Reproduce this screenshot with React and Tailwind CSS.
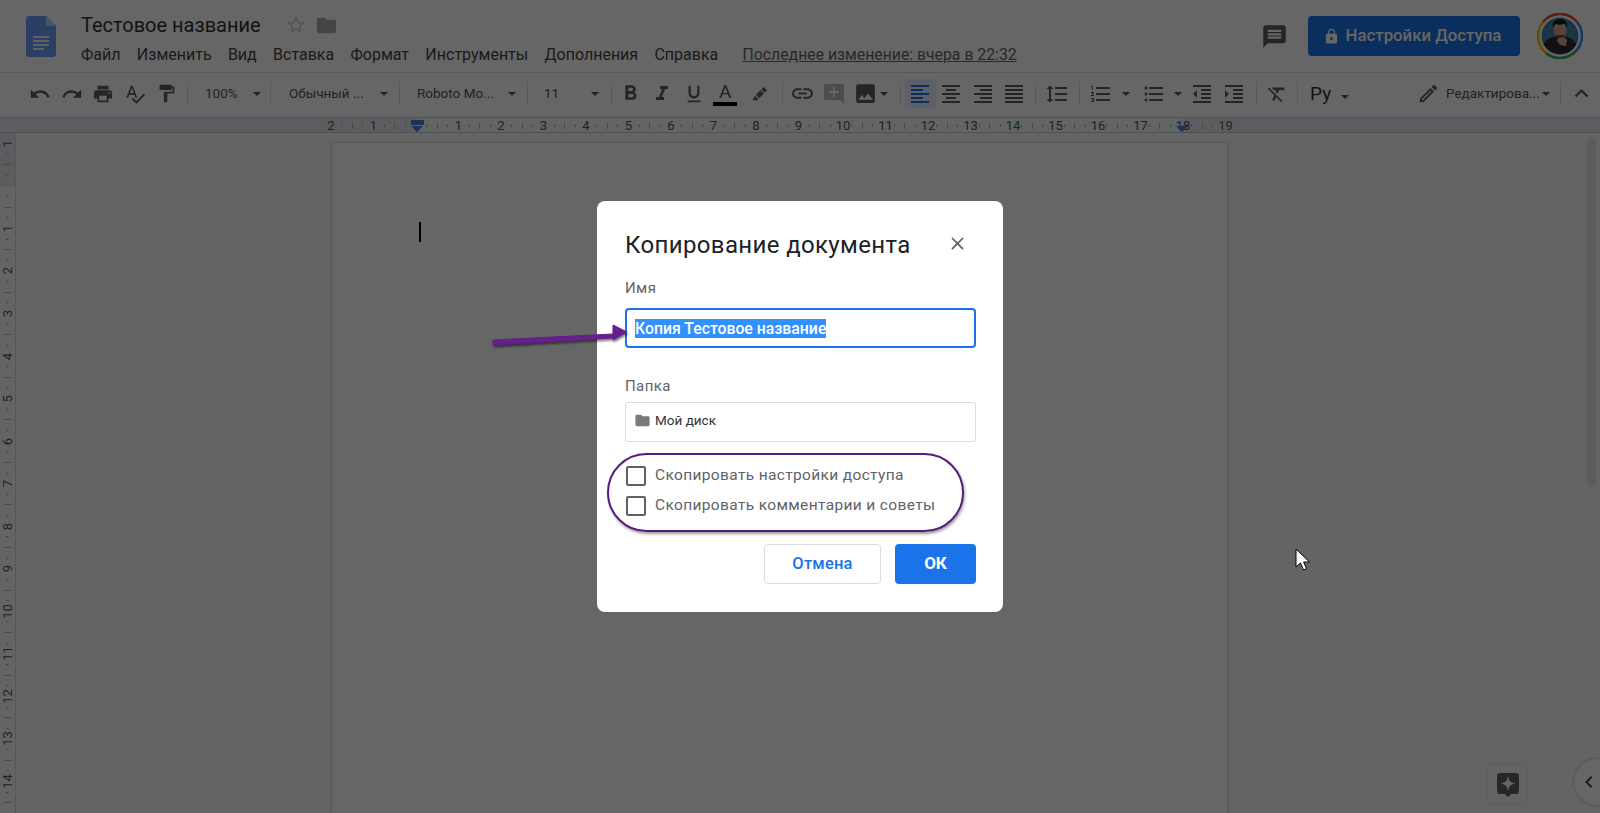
import React from "react";
import {
  MdUndo, MdRedo, MdPrint, MdSpellcheck, MdFormatPaint, MdFormatBold, MdFormatItalic, MdFormatUnderlined,
  MdLink, MdAddComment, MdInsertPhoto, MdFormatAlignLeft, MdFormatAlignCenter, MdFormatAlignRight,
  MdFormatAlignJustify, MdFormatLineSpacing, MdFormatListNumbered, MdFormatListBulleted, MdFormatIndentDecrease,
  MdFormatIndentIncrease, MdFormatClear, MdOutlineEdit, MdExpandLess, MdLock, MdStarBorder, MdFolder, MdMessage, MdClose,
  MdChevronLeft,
} from "react-icons/md";

const font = "font-['Roboto',sans-serif]";
const menu = ["Файл", "Изменить", "Вид", "Вставка", "Формат", "Инструменты", "Дополнения", "Справка"];
const hNumbers = [2, 1, 0, 1, 2, 3, 4, 5, 6, 7, 8, 9, 10, 11, 12, 13, 14, 15, 16, 17, 18];
const vNumbers = [1, 0, 1, 2, 3, 4, 5, 6, 7, 8, 9, 10, 11, 12, 13, 14, 0];

const Sep = () => <div className="h-[23px] w-px shrink-0 bg-[#dadce0]" />;
const Arrow = ({ className = "" }) => (
  <div className={`h-0 w-0 shrink-0 border-x-[4px] border-t-[4px] border-x-transparent border-t-[#555] ${className}`} />
);
const Btn = ({ children }) => (
  <div className="flex h-[29px] w-[31.5px] shrink-0 items-center justify-center text-[#5a5e62]">{children}</div>
);
const Drop = ({ width, left, right, label }) => (
  <div className={`flex shrink-0 items-center justify-between ${width} ${left} ${right}`}>
    <span className="text-[13.5px] text-[#555]">{label}</span>
    <Arrow />
  </div>
);

function DocIcon() {
  return (
    <svg width="30" height="41" viewBox="0 0 30 41">
      <path d="M3 0h17l10 10v28a3 3 0 0 1-3 3H3a3 3 0 0 1-3-3V3a3 3 0 0 1 3-3z" fill="#6a9dfb" />
      <path d="M20 0l10 10h-10z" fill="#b4cefc" />
      <path d="M7 20h16v2H7zM7 24h16v2H7zM7 28h16v2H7zM7 32h11v2H7z" fill="#f1f1f1" />
    </svg>
  );
}

function Avatar() {
  return (
    <svg width="46" height="46" viewBox="0 0 46 46">
      <path d="M6 9A22 22 0 0 1 40 9" fill="none" stroke="#ea4335" strokeWidth="2.5" />
      <path d="M40 9A22 22 0 0 1 38 39" fill="none" stroke="#4285f4" strokeWidth="2.5" />
      <path d="M38 39A22 22 0 0 1 9 40" fill="none" stroke="#34a853" strokeWidth="2.5" />
      <path d="M9 40A22 22 0 0 1 6 9" fill="none" stroke="#fbbc04" strokeWidth="2.5" />
      <circle cx="23" cy="23" r="18.5" fill="#3f86a8" />
      <path d="M6.5 31c3-5 8-7 13-8h7c5 1 10 3 13 8a18.500 18.500 0 0 1-33 0z" fill="#2b2a2e" />
      <ellipse cx="23" cy="17" rx="6.500" ry="8.500" fill="#d9a78c" />
      <path d="M16 15c-1-7 3-9 7-9s8 2 7 9c-1-3-2-4-3-4-3 1-6 1-8 0-1 0-2 1-3 4z" fill="#1b1a1c" />
      <path d="M19 21c2 2 6 2 8 0l-1 5c-2 1-4 1-6 0z" fill="#4a352c" />
      <path d="M21 25l6-1 3 3-1 6-6-1-3-4z" fill="#d9a78c" />
    </svg>
  );
}

function Toolbar() {
  return (
    <div className="flex h-[44px] shrink-0 items-center pb-[3px] pl-[24.5px]">
      <Btn><MdUndo size={22} /></Btn>
      <Btn><MdRedo size={22} /></Btn>
      <Btn><MdPrint size={22} /></Btn>
      <Btn><MdSpellcheck size={22} /></Btn>
      <Btn><MdFormatPaint size={21} /></Btn>
      <div className="w-[5px] shrink-0" />
      <Sep />
      <Drop width="w-[82px]" left="pl-[17px]" right="pr-[9px]" label="100%" />
      <Sep />
      <Drop width="w-[128px]" left="pl-[18px]" right="pr-[11px]" label="Обычный ..." />
      <Sep />
      <Drop width="w-[127px]" left="pl-[17px]" right="pr-[11px]" label="Roboto Mo..." />
      <Sep />
      <Drop width="w-[83px]" left="pl-[16px]" right="pr-[12px]" label="11" />
      <Sep />
      <div className="w-[3px] shrink-0" />
      <Btn><MdFormatBold size={25} /></Btn>
      <Btn><MdFormatItalic size={24} /></Btn>
      <Btn><MdFormatUnderlined size={22} /></Btn>
      <Btn>
        <div className="flex flex-col items-center">
          <span className="text-[19px] leading-[20px] text-[#555]">A</span>
          <div className="h-[4px] w-[24px] bg-black" />
        </div>
      </Btn>
      <div className="w-[3px] shrink-0" />
      <Btn>
        <svg width="20" height="20" viewBox="0 0 24 24" fill="currentColor">
          <path d="M16.500 3.500l4 4-3 3-4-4zM12.500 7.500l4 4-5.500 5.500-4-4zM6 14l4 4-1.500 1.500H3z" />
        </svg>
      </Btn>
      <div className="w-[6px] shrink-0" />
      <Sep />
      <div className="w-[4.5px] shrink-0" />
      <Btn><MdLink size={25} /></Btn>
      <Btn><span className="opacity-40"><MdAddComment size={24} /></span></Btn>
      <Btn><MdInsertPhoto size={25} /></Btn>
      <Arrow className="-ml-[2px]" />
      <div className="w-[12px] shrink-0" />
      <Sep />
      <div className="w-[4px] shrink-0" />
      <div className="flex h-[29px] w-[31px] shrink-0 items-center justify-center rounded-[2px] bg-[#e8f0fe] text-[#1a73e8]">
        <MdFormatAlignLeft size={24} />
      </div>
      <Btn><MdFormatAlignCenter size={24} /></Btn>
      <Btn><MdFormatAlignRight size={24} /></Btn>
      <Btn><MdFormatAlignJustify size={24} /></Btn>
      <div className="w-[5px] shrink-0" />
      <Sep />
      <div className="w-[5px] shrink-0" />
      <Btn><MdFormatLineSpacing size={24} /></Btn>
      <div className="w-[6px] shrink-0" />
      <Sep />
      <div className="w-[6px] shrink-0" />
      <Btn><MdFormatListNumbered size={24} /></Btn>
      <Arrow className="ml-[5px]" />
      <div className="w-[8px] shrink-0" />
      <Btn><MdFormatListBulleted size={24} /></Btn>
      <Arrow className="ml-[4px]" />
      <div className="w-[5px] shrink-0" />
      <Btn><MdFormatIndentDecrease size={24} /></Btn>
      <Btn><MdFormatIndentIncrease size={24} /></Btn>
      <div className="w-[6px] shrink-0" />
      <Sep />
      <div className="w-[5px] shrink-0" />
      <Btn><MdFormatClear size={22} /></Btn>
      <div className="w-[4px] shrink-0" />
      <Sep />
      <span className="ml-[12px] w-[21px] shrink-0 text-[19px] leading-none text-[#333]">Ру</span>
      <Arrow className="mt-[6px] ml-[10px] border-x-[3px] border-t-[3px]" />
      <MdOutlineEdit size={23} className="ml-[68px] shrink-0 text-[#5a5e62]" />
      <span className="ml-[6px] text-[13.5px] text-[#555]">Редактирова...</span>
      <Arrow className="ml-[2px]" />
      <div className="ml-[10px] shrink-0"><Sep /></div>
      <MdExpandLess size={27} className="ml-[7px] shrink-0 text-[#5a5e62]" />
    </div>
  );
}

function HRuler() {
  return (
    <div className="relative h-[16px] shrink-0 overflow-hidden border-y border-[#c8cbd0] bg-[#e6e9f0]">
      <div className="absolute top-0 bottom-0 left-[417px] w-[765px] bg-[#f8f9fb]" />
      <div className="relative flex h-full items-center pl-[325.7px]">
        {hNumbers.map((n, i) => (
          <div key={i} className="flex h-full w-[42.5px] shrink-0 items-center">
            <div className="w-[10.62px] text-center text-[13px] leading-none text-[#555]">{n === 0 ? "" : n}</div>
            <div className="flex w-[10.62px] justify-center"><div className="h-[3px] w-px bg-[#b5b5b5]" /></div>
            <div className="flex w-[10.62px] justify-center"><div className="h-[7px] w-px bg-[#b5b5b5]" /></div>
            <div className="flex w-[10.62px] justify-center"><div className="h-[3px] w-px bg-[#b5b5b5]" /></div>
          </div>
        ))}
        <div className="w-[10.62px] text-center text-[13px] leading-none text-[#555]">19</div>
      </div>
      <div className="absolute top-[2px] left-[411px] h-[5px] w-[13px] bg-[#4a7fe0]" />
      <div className="absolute top-[8px] left-[411px] h-0 w-0 border-x-[6.5px] border-t-[6px] border-x-transparent border-t-[#4a7fe0]" />
      <div className="absolute top-[8px] left-[1176px] h-0 w-0 border-x-[6px] border-t-[6px] border-x-transparent border-t-[#4a7fe0]" />
    </div>
  );
}

function VRuler() {
  return (
    <div className="relative w-[16px] shrink-0 overflow-hidden border-r border-[#d8dadd] bg-[#fafbfb]">
      <div className="absolute top-0 right-0 left-0 h-[54px] bg-[#e3e6ea]" />
      <div className="relative mt-[5px] flex flex-col">
        {vNumbers.map((n, i) => (
          <div key={i} className="flex h-[42.55px] shrink-0 flex-col items-center">
            <div className="flex h-[10.64px] items-center justify-center">
              <span className="-rotate-90 text-[13px] leading-none text-[#555]">{n === 0 ? "" : n}</span>
            </div>
            <div className="flex h-[10.64px] items-center"><div className="h-px w-[3px] bg-[#b5b5b5]" /></div>
            <div className="flex h-[10.64px] items-center"><div className="h-px w-[7px] bg-[#b5b5b5]" /></div>
            <div className="flex h-[10.64px] items-center"><div className="h-px w-[3px] bg-[#b5b5b5]" /></div>
          </div>
        ))}
      </div>
    </div>
  );
}

function CopyDialog() {
  return (
    <div className="flex h-[411px] w-[406px] flex-col rounded-[8px] bg-white pt-[28px] pr-[27px] pb-[28px] pl-[28px]">
      <div className="flex h-[32px] items-center justify-between">
        <h2 className="text-[24px] leading-[32px] font-normal tracking-[0.36px] text-[#202124]">Копирование документа</h2>
        <MdClose size={21} className="-mt-[4px] mr-[8px] text-[#5f6368]" />
      </div>
      <label className="mt-[17px] h-[20px] text-[15px] leading-[20px] tracking-[0.4px] text-[#5f6368]">Имя</label>
      <div className="mt-[10px] flex h-[40px] items-center rounded-[4px] border-2 border-[#1a73e8] pl-[8px]">
        <span className="bg-[#3390ff] text-[15.8px] leading-[19px] font-medium text-white">Копия Тестовое название</span>
      </div>
      <label className="mt-[28px] h-[20px] text-[15px] leading-[20px] tracking-[0.4px] text-[#5f6368]">Папка</label>
      <div className="mt-[6px] flex h-[40px] items-center rounded-[2px] border border-[#dadce0] pb-[3px] pl-[8px]">
        <MdFolder size={17} className="text-[#7a7a7a]" />
        <span className="ml-[4px] text-[13.5px] text-[#333]">Мой диск</span>
      </div>
      <div className="mt-[24px] flex flex-col gap-[10px]">
        <div className="flex h-[20px] items-center">
          <div className="ml-px h-[20px] w-[20px] rounded-[2px] border-2 border-[#5f6368]" />
          <span className="-mt-px ml-[9px] text-[15.5px] tracking-[0.35px] text-[#5f6368]">Скопировать настройки доступа</span>
        </div>
        <div className="flex h-[20px] items-center">
          <div className="ml-px h-[20px] w-[20px] rounded-[2px] border-2 border-[#5f6368]" />
          <span className="-mt-px ml-[9px] text-[15.5px] tracking-[0.35px] text-[#5f6368]">Скопировать комментарии и советы</span>
        </div>
      </div>
      <div className="mt-[28px] flex justify-end gap-[14px]">
        <button className="h-[40px] w-[117px] rounded-[4px] border border-[#dadce0] text-[16.5px] font-medium tracking-[0.2px] text-[#1a73e8]">Отмена</button>
        <button className="h-[40px] w-[81px] rounded-[4px] bg-[#1a73e8] text-[17px] font-bold text-white">ОК</button>
      </div>
    </div>
  );
}

export default function App() {
  return (
    <div className={`relative flex h-screen w-full flex-col overflow-hidden bg-white ${font}`}>
      <header className="flex h-[73px] shrink-0 items-start border-b border-[#dadce0]">
        <div className="mt-[16px] ml-[26px]"><DocIcon /></div>
        <div className="mt-[11px] ml-[25px] flex flex-col">
          <div className="flex h-[28px] items-center">
            <span className="text-[20px] text-[#333]">Тестовое название</span>
            <MdStarBorder size={22} className="ml-[24px] text-[#ccc]" />
            <MdFolder size={23} className="ml-[8px] text-[#aaa]" />
          </div>
          <div className="mt-[5px] flex items-center gap-[16.3px] text-[16px] leading-[22px] text-[#444]">
            {menu.map((m) => <span key={m}>{m}</span>)}
            <span className="ml-[8px] text-[15.8px] text-[#666] underline">Последнее изменение: вчера в 22:32</span>
          </div>
        </div>
        <div className="ml-auto flex items-center pt-[13px] pr-[17px]">
          <MdMessage size={27} className="mr-[20px] text-[#5a5e62]" />
          <button className="flex h-[40px] w-[212px] items-center justify-center gap-[6px] rounded-[4px] bg-[#1a73e8] pr-[4px] text-[16.8px] font-medium text-white">
            <MdLock size={17} />
            Настройки Доступа
          </button>
          <div className="ml-[17px]"><Avatar /></div>
        </div>
      </header>
      <Toolbar />
      <HRuler />
      <div className="relative flex min-h-0 flex-1 bg-[#f7faf8]">
        <VRuler />
        <div className="mt-[10px] ml-[316px] w-[895px] bg-white pt-[79px] pl-[87px] shadow-[0_0_3px_rgba(0,0,0,0.3)]">
          <div className="h-[20px] w-[2px] bg-black" />
        </div>
        <div className="absolute top-[4px] right-[4px] h-[350px] w-[9px] rounded-full bg-[#e3e5e8]" />
        <div className="absolute right-[72px] bottom-[8px] flex h-[42px] w-[41px] items-center justify-center rounded-[3px] border border-[#ececec] bg-[#f7faf8]">
          <svg width="22" height="25" viewBox="0 0 22 25" className="mt-[3px]">
            <path d="M3 0h16a3 3 0 0 1 3 3v15a3 3 0 0 1-3 3h-5l-3 3-3-3H3a3 3 0 0 1-3-3V3a3 3 0 0 1 3-3z" fill="#5f6368" />
            <path d="M11 3c.8 4.500 2.500 6.700 7.500 7.500-5 .8-6.700 3-7.500 7.500-.8-4.500-2.500-6.700-7.500-7.500 5-.8 6.700-3 7.500-7.500z" fill="#fff" />
          </svg>
        </div>
        <div className="absolute -right-[20px] bottom-[8px] flex h-[46px] w-[46px] items-center rounded-full bg-white pl-[3px] shadow-[0_0_3px_rgba(0,0,0,0.3)]">
          <MdChevronLeft size={24} className="text-[#444]" />
        </div>
      </div>

      <div className="absolute inset-0 flex items-center justify-center bg-black/60">
        <CopyDialog />
      </div>

      <svg className="absolute top-[320px] left-[488px]" width="145" height="30" viewBox="0 0 145 30">
        <path d="M5 20L125 14V5L139 12L125 20V18L5 25z" fill="#661f8c" stroke="#661f8c" strokeWidth="1" className="drop-shadow-[1px_2px_1px_rgba(0,0,0,0.5)]" />
      </svg>
      <div className="absolute top-[453px] left-[607px] h-[79px] w-[357px] rounded-full border-2 border-[#571a80] shadow-[1px_2px_3px_rgba(0,0,0,0.4)]" />
      <svg className="absolute top-[548px] left-[1295px]" width="16" height="24" viewBox="0 0 16 24">
        <path d="M1 1V19L5.500 15L8.500 22L11.500 20.600L8.600 14H14.500z" fill="#fff" stroke="#000" strokeWidth="1" />
      </svg>
    </div>
  );
}
